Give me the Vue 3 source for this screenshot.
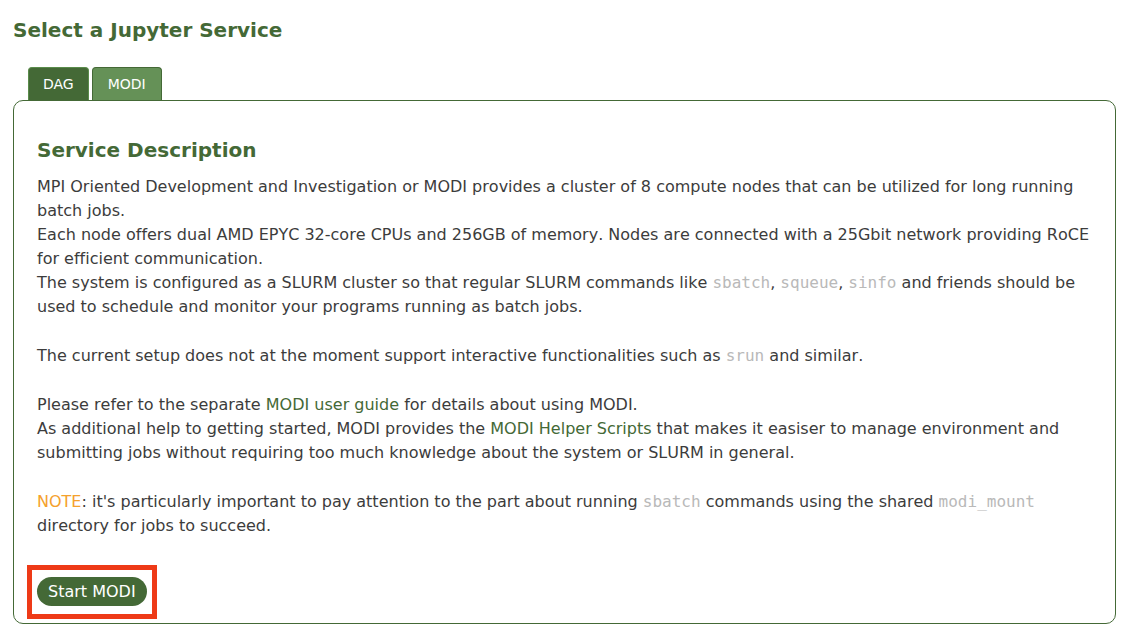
<script setup>
import { ref } from 'vue'

const tabs = ['DAG', 'MODI']
const active = ref('MODI')
</script>

<template>
  <main class="page">
    <h2 class="title">Select a Jupyter Service</h2>
    <div class="tabs" role="tablist">
      <button
        v-for="tab in tabs"
        :key="tab"
        type="button"
        role="tab"
        class="tab"
        :class="{ active: tab === active }"
        :aria-selected="tab === active"
        @click="active = tab"
      >{{ tab }}</button>
    </div>
    <section class="panel">
      <h2 class="heading">Service Description</h2>
      <div class="text">
        <p>MPI Oriented Development and Investigation or MODI provides a cluster of 8 compute nodes that can be utilized for long running batch jobs.</p>
        <p>Each node offers dual AMD EPYC 32-core CPUs and 256GB of memory. Nodes are connected with a 25Gbit network providing RoCE for efficient communication.</p>
        <p class="last">The system is configured as a SLURM cluster so that regular SLURM commands like <code>sbatch</code>, <code>squeue</code>, <code>sinfo</code> and friends should be used to schedule and monitor your programs running as batch jobs.</p>
        <p class="last">The current setup does not at the moment support interactive functionalities such as <code>srun</code> and similar.</p>
        <p>Please refer to the separate <a href="#guide">MODI user guide</a> for details about using MODI.</p>
        <p class="last">As additional help to getting started, MODI provides the <a href="#scripts">MODI Helper Scripts</a> that makes it easiser to manage environment and submitting jobs without requiring too much knowledge about the system or SLURM in general.</p>
        <p><span class="note">NOTE</span>: it's particularly important to pay attention to the part about running <code>sbatch</code> commands using the shared <code>modi_mount</code> directory for jobs to succeed.</p>
      </div>
      <div class="highlight">
        <button type="button" class="start">Start MODI</button>
      </div>
    </section>
  </main>
</template>

<style>
body {
  background: #fff;
}
</style>

<style scoped>
.page {
  padding: 16px 13px 15px;
  font-family: Verdana, "DejaVu Sans", sans-serif;
  font-kerning: none;
  font-variant-ligatures: none;
  color: #3c3c3c;
}
.title,
.heading {
  margin: 0;
  font-size: 20px;
  line-height: 28px;
  font-weight: 700;
  color: #446936;
}
.tabs {
  display: flex;
  gap: 3px;
  margin-top: 23px;
  padding-left: 15px;
}
.tab {
  height: 33px;
  padding: 0 14px;
  border: 1px solid #5a8c4b;
  border-bottom: 0;
  border-radius: 4px 4px 0 0;
  background: #446936;
  color: #fff;
  font-family: inherit;
  font-size: 14px;
  cursor: pointer;
}
.tab.active {
  padding: 0 15px;
  border-color: #446936;
  background: #659157;
}
.panel {
  padding: 35px 14px 4px 23px;
  border: 1px solid #446936;
  border-radius: 10px;
}
.text {
  margin-top: 11px;
  font-size: 16px;
  line-height: 24px;
}
.text p {
  margin: 0;
}
.text .last {
  margin-bottom: 25px;
}
.text code {
  font-family: "DejaVu Sans Mono", monospace;
  font-size: 16px;
  color: #b9b9b9;
}
.text a {
  color: #446936;
  text-decoration: none;
}
.note {
  color: #f5a12c;
}
.highlight {
  width: fit-content;
  margin: 27px 0 0 -10px;
  padding: 7px 5px 8px;
  border: 5px solid #ee3a17;
}
.start {
  display: block;
  height: 29px;
  padding: 0 11px;
  border: 0;
  border-radius: 15px;
  background: #446936;
  color: #fff;
  font-family: inherit;
  font-size: 16px;
  cursor: pointer;
}
</style>
